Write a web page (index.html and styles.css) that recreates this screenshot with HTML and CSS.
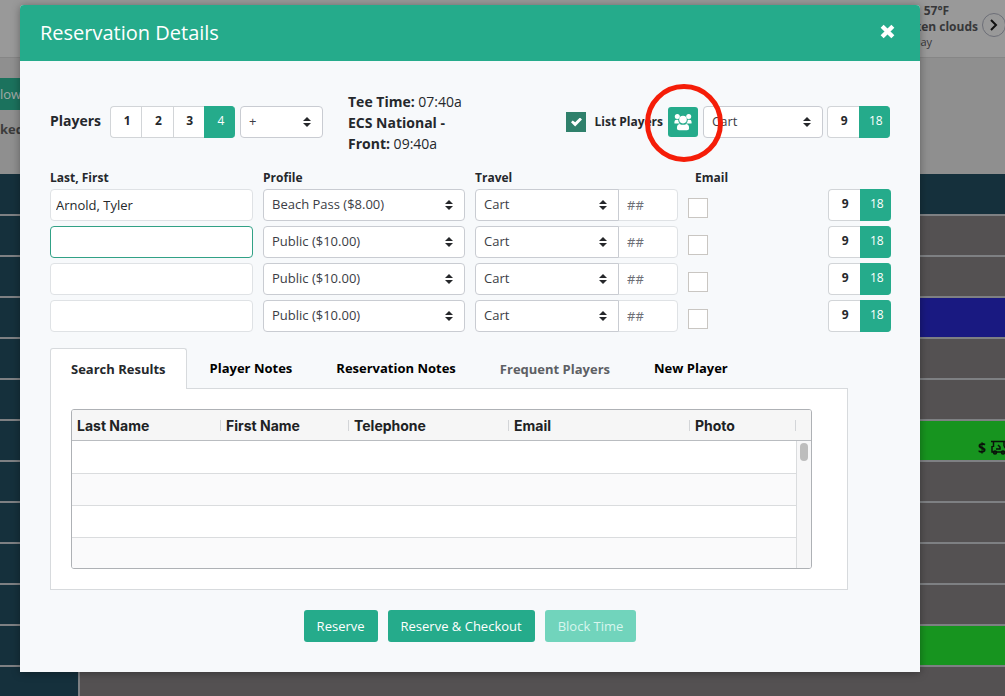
FILE: index.html
```html
<!DOCTYPE html>
<html lang="en">
<head>
<meta charset="utf-8">
<meta name="viewport" content="width=device-width, initial-scale=1">
<title>Reservation Details</title>
<link rel="stylesheet" href="styles.css">
</head>
<body>
<svg class="defs" aria-hidden="true">
  <symbol id="sort" viewBox="0 0 8 10"><path d="M4 0 8 4H0ZM4 10 0 6H8Z"/></symbol>
</svg>
<div class="stage">
  <div class="sheet">
    <header class="topbar">
      <div class="weather">
        <strong>57°F</strong>
        <strong class="sky">ken clouds</strong>
        <span>day</span>
      </div>
      <button class="next" type="button" aria-label="Next day">
        <svg viewBox="0 0 10 14"><path d="M2 2l5 5-5 5"/></svg>
      </button>
    </header>
    <div class="filters">
      <button class="now" type="button">low</button>
      <strong class="booked">ked</strong>
    </div>
    <div class="times">
      <div class="slot head"></div>
      <div class="slot"><i></i><b></b></div>
      <div class="slot"><i></i><b></b></div>
      <div class="slot"><i></i><b class="blue"></b></div>
      <div class="slot"><i></i><b></b></div>
      <div class="slot"><i></i><b></b></div>
      <div class="slot"><i></i><b class="green">$
        <svg class="cart" viewBox="0 0 16 15"><path d="M0 1.500H16M2.500 1.500V7M13 1.500V6M1 6V12H15V9L13 6M5 9H9V7L7 5"/><circle cx="4" cy="12.500" r="1.500"/><circle cx="12" cy="12.500" r="1.500"/></svg></b></div>
      <div class="slot"><i></i><b></b></div>
      <div class="slot"><i></i><b></b></div>
      <div class="slot"><i></i><b></b></div>
      <div class="slot"><i></i><b></b></div>
      <div class="slot"><i></i><b class="green"></b></div>
      <div class="slot last"><i></i><b></b></div>
    </div>
  </div>

  <main class="modal" role="dialog" aria-labelledby="title">
    <header class="modal-head">
      <h1 id="title">Reservation Details</h1>
      <button class="close" type="button" aria-label="Close">
        <svg viewBox="0 0 14 14"><path d="M2 2l10 10M12 2l-10 10"/></svg>
      </button>
    </header>

    <form class="modal-body">
      <div class="summary">
        <span class="players">Players</span>
        <div class="seg count">
          <button type="button">1</button><button type="button">2</button><button type="button">3</button><button type="button" class="on">4</button>
        </div>
        <span class="select more"><select aria-label="More players"><option>+</option></select><svg><use href="#sort"/></svg></span>
        <p class="tee"><strong>Tee Time:</strong> 07:40a<br><strong>ECS National -</strong><br><strong>Front:</strong> 09:40a</p>
        <div class="tools">
          <input class="check" type="checkbox" id="list" checked>
          <label class="list-label" for="list">List Players</label>
          <span class="group-wrap">
            <button class="group" type="button" aria-label="Group">
              <svg viewBox="0 0 18 18"><circle cx="3.300" cy="3.600" r="2.500"/><circle cx="14.700" cy="3.600" r="2.500"/><path d="M.4 10V9Q.4 6.700 2.700 6.700H4.200Q4.200 9.300 5.900 10.600H1Q.4 10.600 .4 10ZM17.600 10V9Q17.600 6.700 15.300 6.700H13.800Q13.800 9.300 12.100 10.600H17Q17.600 10.600 17.600 10Z"/><circle cx="9" cy="6.600" r="3.800"/><path d="M2.900 15.200Q2.900 11.400 5.600 10.900Q9 12.600 12.400 10.900Q15.100 11.400 15.100 15.200Q15.100 17.300 13 17.300H5Q2.900 17.300 2.900 15.200Z"/></svg>
            </button>
            <span class="ring"></span>
          </span>
          <span class="select all-travel"><select aria-label="Travel for all"><option>Cart</option></select><svg><use href="#sort"/></svg></span>
          <div class="seg"><button type="button">9</button><button type="button" class="on">18</button></div>
        </div>
      </div>

      <div class="roster">
        <div class="line labels"><span>Last, First</span><span>Profile</span><span>Travel</span><span class="email">Email</span></div>
        <div class="line">
          <input class="field" aria-label="Name 1" value="Arnold, Tyler">
          <span class="select"><select aria-label="Profile 1"><option>Beach Pass ($8.00)</option></select><svg><use href="#sort"/></svg></span>
          <span class="travel"><span class="select"><select aria-label="Travel 1"><option>Cart</option></select><svg><use href="#sort"/></svg></span><input class="field num" placeholder="##" aria-label="Cart number 1"></span>
          <input class="check" type="checkbox" aria-label="Email 1">
          <div class="seg"><button type="button">9</button><button type="button" class="on">18</button></div>
        </div>
        <div class="line">
          <input class="field current" aria-label="Name 2">
          <span class="select"><select aria-label="Profile 2"><option>Public ($10.00)</option></select><svg><use href="#sort"/></svg></span>
          <span class="travel"><span class="select"><select aria-label="Travel 2"><option>Cart</option></select><svg><use href="#sort"/></svg></span><input class="field num" placeholder="##" aria-label="Cart number 2"></span>
          <input class="check" type="checkbox" aria-label="Email 2">
          <div class="seg"><button type="button">9</button><button type="button" class="on">18</button></div>
        </div>
        <div class="line">
          <input class="field" aria-label="Name 3">
          <span class="select"><select aria-label="Profile 3"><option>Public ($10.00)</option></select><svg><use href="#sort"/></svg></span>
          <span class="travel"><span class="select"><select aria-label="Travel 3"><option>Cart</option></select><svg><use href="#sort"/></svg></span><input class="field num" placeholder="##" aria-label="Cart number 3"></span>
          <input class="check" type="checkbox" aria-label="Email 3">
          <div class="seg"><button type="button">9</button><button type="button" class="on">18</button></div>
        </div>
        <div class="line">
          <input class="field" aria-label="Name 4">
          <span class="select"><select aria-label="Profile 4"><option>Public ($10.00)</option></select><svg><use href="#sort"/></svg></span>
          <span class="travel"><span class="select"><select aria-label="Travel 4"><option>Cart</option></select><svg><use href="#sort"/></svg></span><input class="field num" placeholder="##" aria-label="Cart number 4"></span>
          <input class="check" type="checkbox" aria-label="Email 4">
          <div class="seg"><button type="button">9</button><button type="button" class="on">18</button></div>
        </div>
      </div>

      <section class="tabs">
        <div class="tablist" role="tablist">
          <button type="button" role="tab" aria-selected="true" class="tab active">Search Results</button>
          <button type="button" role="tab" class="tab">Player Notes</button>
          <button type="button" role="tab" class="tab">Reservation Notes</button>
          <button type="button" role="tab" class="tab" disabled>Frequent Players</button>
          <button type="button" role="tab" class="tab">New Player</button>
        </div>
        <div class="panel">
          <div class="grid">
            <table>
              <colgroup><col class="c-last"><col class="c-first"><col class="c-phone"><col class="c-mail"><col class="c-photo"><col class="c-bar"></colgroup>
              <thead><tr><th>Last Name</th><th>First Name</th><th>Telephone</th><th>Email</th><th>Photo</th><th></th></tr></thead>
              <tbody>
                <tr><td colspan="5"></td><td class="track" rowspan="4"><div class="thumb"></div></td></tr>
                <tr><td colspan="5"></td></tr>
                <tr><td colspan="5"></td></tr>
                <tr><td colspan="5"></td></tr>
              </tbody>
            </table>
          </div>
        </div>
      </section>

      <footer class="actions">
        <button class="btn" type="button">Reserve</button>
        <button class="btn" type="button">Reserve &amp; Checkout</button>
        <button class="btn" type="button" disabled>Block Time</button>
      </footer>
    </form>
  </main>
</div>
</body>
</html>
```

FILE: styles.css
```css
:root {
  --green: #25ab8b;
  --line: #c9ccd2;
  --ink: #25282c;
}
*, *::before, *::after { box-sizing: border-box; }
body {
  margin: 0;
  font: 13px/20px "Open Sans", sans-serif;
  color: var(--ink);
}
button, input, select { font: inherit; color: inherit; margin: 0; }
button { border: 0; background: none; padding: 0; }
.defs { position: absolute; width: 0; height: 0; }
.stage { display: grid; min-height: 100vh; }
.sheet, .modal { grid-area: 1 / 1; min-width: 0; }

/* Dimmed tee sheet */
.sheet { display: flex; flex-direction: column; background: #8f8f8f; overflow: hidden; }
.topbar {
  display: flex;
  justify-content: flex-end;
  align-items: flex-start;
  gap: 4px;
  height: 58px;
  background: #999;
  border-bottom: 1px solid #868686;
  color: #373739;
  font-size: 12px;
  line-height: 16px;
}
.weather { display: flex; flex-direction: column; padding-top: 3px; }
.weather strong { padding-left: 10px; }
.weather .sky { padding-left: 0; }
.weather span { font-size: 11px; line-height: 14px; }
.next {
  display: grid;
  place-items: center;
  width: 24px;
  height: 24px;
  margin: 13px -1px 0 0;
  border: 1px solid #6d6f78;
  border-radius: 50%;
}
.next svg { width: 10px; height: 14px; fill: none; stroke: #111; stroke-width: 2; }
.filters { height: 116px; padding-top: 20px; color: #3c3c3c; line-height: 38px; }
.now { display: block; width: 78px; height: 32px; background: #1b725d; color: #a4aaa8; line-height: 32px; text-align: left; }
.booked { display: block; }
.times { flex: 1; display: flex; flex-direction: column; }
.slot { display: flex; height: 41px; border-bottom: 2px solid #7e8083; }
.slot i { width: 80px; background: #15303c; border-right: 2px solid #7e8083; }
.slot b {
  flex: 1;
  display: flex;
  align-items: center;
  justify-content: flex-end;
  gap: 5px;
  padding-top: 14px;
  background: #545152;
  color: #0a120a;
  font-size: 14px;
}
.slot b.blue { background: #191981; }
.slot b.green { background: #17941f; }
.slot.head { height: 42px; background: #15303c; }
.slot.last { flex: 1; border: 0; }
.cart { width: 16px; height: 15px; margin-right: -2px; fill: none; stroke: #0a120a; stroke-width: 1.500; }

/* Dialog */
.modal {
  position: relative;
  align-self: start;
  margin: 5px 85px 24px 20px;
  background: #f7f9fb;
  border-radius: 4px 4px 0 0;
  box-shadow: 0 1px 8px rgba(0, 0, 0, .35);
}
.modal-head {
  display: flex;
  align-items: center;
  justify-content: space-between;
  height: 56px;
  padding: 0 25px 0 20px;
  background: var(--green);
  color: #fff;
  border-radius: 4px 4px 0 0;
}
h1 { margin: 0; font-size: 20px; line-height: 28px; font-weight: 400; }
.close { display: flex; padding-bottom: 4px; }
.close svg { width: 15px; height: 15px; stroke: #fff; stroke-width: 4; }
.modal-body { padding: 30px; }

.seg { display: flex; width: 63px; height: 32px; }
.seg button {
  flex: 1;
  padding: 0 0 2px 2px;
  border: 1px solid #d2d5d8;
  border-right-width: 0;
  background: #fff;
  font-size: 12px;
  font-weight: 700;
}
.seg button:first-child { border-radius: 4px 0 0 4px; }
.seg button:last-child { border-radius: 0 4px 4px 0; }
.seg .on { background: var(--green); border-color: var(--green); color: #fff; font-weight: 400; }
.count { width: 125px; }

.select { position: relative; display: flex; min-width: 0; }
.select select {
  appearance: none;
  width: 100%;
  height: 32px;
  padding: 0 28px 2px 8px;
  border: 1px solid var(--line);
  border-radius: 4px;
  background: #fff;
  color: #3b3d45;
}
.select svg {
  position: absolute;
  right: 12px;
  top: 11px;
  width: 8px;
  height: 10px;
  fill: #26282b;
  pointer-events: none;
}
.field {
  width: 100%;
  min-width: 0;
  height: 32px;
  padding: 0 5px;
  border: 1px solid #dfe2e5;
  border-radius: 4px;
  background: #fff;
}
.field.current { border-color: #31a186; }
.field::placeholder { color: #6c6e75; opacity: 1; }
.check {
  appearance: none;
  display: grid;
  place-items: center;
  flex: none;
  width: 20px;
  height: 20px;
  border: 1px solid #c9c6c2;
  background: #fff;
}
.check:checked { background: #2f806b; border-color: #2f806b; }
.check:checked::before {
  content: "";
  width: 11px;
  height: 9px;
  background: #fff;
  clip-path: polygon(0 52%, 16% 32%, 38% 54%, 82% 0, 100% 22%, 38% 100%);
}

.summary { display: flex; align-items: center; }
.players { width: 60px; padding-bottom: 2px; font-size: 14px; font-weight: 700; }
.more { width: 83px; margin-left: 5px; }
.tee { margin: 0 0 -1px 25px; font-size: 14px; line-height: 21px; }
.tools { display: flex; align-items: center; margin-left: auto; }
.list-label { margin: 0 5px 0 8px; font-size: 12px; font-weight: 700; }
.group-wrap { position: relative; display: flex; }
.group {
  display: grid;
  place-items: center;
  width: 30px;
  height: 30px;
  border-radius: 3px;
  background: var(--green);
}
.group svg { width: 18px; height: 18px; fill: #fff; }
.ring {
  position: absolute;
  z-index: 1;
  inset: -23px -25px -25px -23px;
  border: 5px solid #f51d08;
  border-radius: 50%;
  pointer-events: none;
}
.all-travel { width: 120px; margin: 0 4px 0 5px; }

.roster { display: flex; flex-direction: column; gap: 5px; margin: 15px -1px 0 0; }
.line {
  display: grid;
  grid-template-columns: 203fr 202fr 203fr 130fr 63px;
  column-gap: 10px;
  align-items: center;
}
.line .check { margin-top: 6px; }
.labels { margin-bottom: -4px; font-size: 12px; line-height: 20px; font-weight: 700; }
.email { padding-left: 7px; }
.travel { display: flex; }
.travel .select { flex: 1; }
.travel select { border-radius: 4px 0 0 4px; }
.travel .num { width: 60px; margin-left: -1px; padding: 0 8px; border-radius: 0 4px 4px 0; }

.tabs { margin: 16px 42px 0 0; }
.tablist { display: flex; gap: 2px; }
.tab { height: 40px; padding: 0 20px 2px; font-weight: 700; color: #000; border: 1px solid transparent; border-bottom: 0; }
.tab:disabled { padding-bottom: 0; color: #5d6064; }
.tab.active {
  position: relative;
  z-index: 1;
  height: 41px;
  margin-bottom: -1px;
  padding-bottom: 0;
  background: #fff;
  border-color: #d7dadd;
  border-radius: 3px 3px 0 0;
  color: var(--ink);
}
.panel { padding: 20px 35px 20px 20px; background: #fff; border: 1px solid #d7dadd; }
.grid { border: 1px solid #aeb1b5; border-radius: 3px; overflow: hidden; }
table { width: 100%; table-layout: fixed; border-collapse: separate; border-spacing: 0; }
.c-last { width: 149px; }
.c-first { width: 128px; }
.c-phone { width: 160px; }
.c-mail { width: 181px; }
.c-bar { width: 15px; }
th {
  height: 31px;
  padding: 2px 5px 0;
  background: linear-gradient(#d3d5d8, #d3d5d8) right 0 top 10px / 1px 11px no-repeat #f6f6f6;
  border-bottom: 1px solid #b9bcc0;
  color: #202224;
  font: 700 14px/20px Inter, sans-serif;
  text-align: left;
}
th:last-child { background: #f6f6f6; }
td { height: 32px; padding: 0; border-top: 1px solid #dadcde; }
tbody tr:first-child td { border-top: 0; }
tbody tr:last-child td { height: 31px; }
tbody tr:nth-child(even) td { background: #fafafb; }
.track { border-left: 1px solid #dadcde; background: #f7f7f8; vertical-align: top; }
.thumb { width: 8px; height: 18px; margin: 2px 0 0 3px; border-radius: 4px; background: #bdbdbd; }

.actions { display: flex; justify-content: center; gap: 10px; padding-top: 20px; }
.btn { height: 32px; padding: 0 13px; border-radius: 3px; background: var(--green); color: #fff; }
.btn:disabled { background: #71d4bc; color: #d8f6ee; }
```
